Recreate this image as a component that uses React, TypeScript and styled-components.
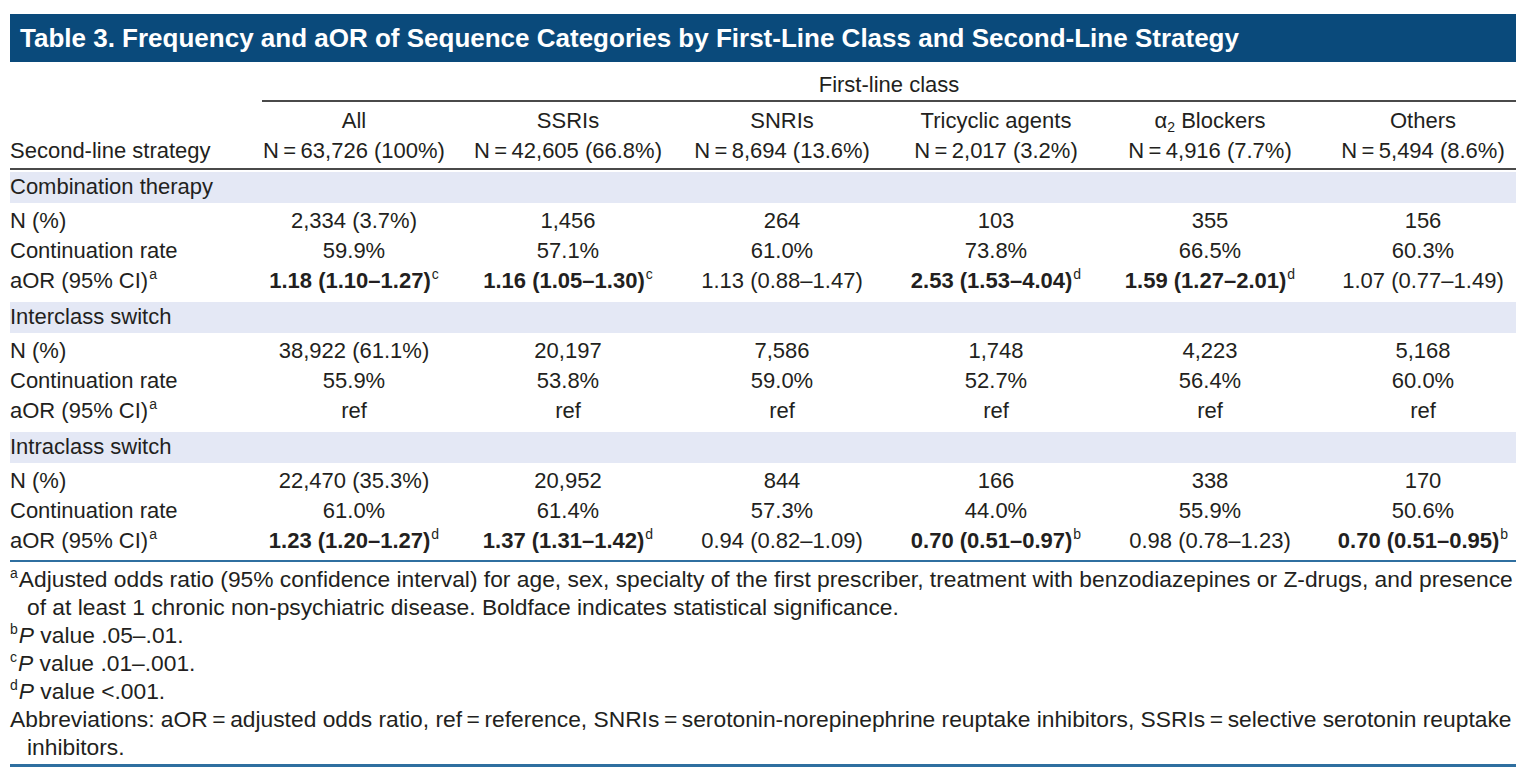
import React from 'react';
import styled, { createGlobalStyle } from 'styled-components';

const GlobalStyle = createGlobalStyle`
  body {
    margin: 0;
    background: #ffffff;
    color: #231f20;
    font-family: "Liberation Sans", Arial, sans-serif;
  }
`;

const Page = styled.div`
  width: 1506px;
  padding: 14px 20px 0 10px;
`;

const TitleBar = styled.div`
  height: 48px;
  display: flex;
  align-items: center;
  padding-left: 10px;
  background: #0a4a7b;
  color: #ffffff;
  font-size: 26px;
  font-weight: bold;
`;

const Row = styled.div`
  display: grid;
  grid-template-columns: 237px repeat(5, 214px) 199px;
  font-size: 22px;
  line-height: 30px;
  white-space: nowrap;
`;

const GroupHeader = styled(Row)`
  height: 40px;
  align-items: end;
`;

const SpanTitle = styled.div`
  grid-column: 2 / -1;
  margin-left: 15px;
  text-align: center;
  border-bottom: 2px solid #4a4a4a;
`;

const HeadBlock = styled.div`
  padding: 4px 0 2px;
  border-bottom: 2px solid #4a4a4a;
`;

const Cell = styled.div<{ $label?: boolean }>`
  text-align: ${(p) => (p.$label ? 'left' : 'center')};
  &:last-child {
    padding-left: 13px;
  }
`;

const Band = styled.div`
  margin-top: 2px;
  height: 31px;
  line-height: 30px;
  background: #e4e8f5;
  font-size: 22px;
`;

const Body = styled.div`
  padding: 3px 0 4px;
`;

const Bold = styled.b`
  font-weight: bold;
`;

const Sup = styled.sup`
  font-size: 14px;
  font-weight: normal;
  vertical-align: 9px;
  line-height: 0;
  margin-left: 1px;
`;

const Sub = styled.sub`
  font-size: 14px;
  vertical-align: -4px;
  line-height: 0;
`;

const TableEnd = styled.div`
  border-top: 2px solid #2f6fa0;
`;

const Notes = styled.div`
  padding: 3px 0 3px;
  font-size: 22.8px;
  line-height: 28px;
  border-bottom: 3px solid #2f6fa0;
`;

const Note = styled.p`
  margin: 0;
  padding-left: 17px;
  text-indent: -17px;
  white-space: nowrap;
`;

const NoteSup = styled.sup`
  font-size: 14px;
  vertical-align: 9px;
  line-height: 0;
  margin-right: 1px;
`;

type Value = { text: string; bold?: boolean; mark?: string };

type DataRow = { label: React.ReactNode; values: Value[] };

type Section = { title: string; rows: DataRow[] };

const aLabel = (
  <>
    aOR (95% CI)<Sup>a</Sup>
  </>
);

const plain = (...items: string[]): Value[] => items.map((text) => ({ text }));

const sections: Section[] = [
  {
    title: 'Combination therapy',
    rows: [
      { label: 'N (%)', values: plain('2,334 (3.7%)', '1,456', '264', '103', '355', '156') },
      { label: 'Continuation rate', values: plain('59.9%', '57.1%', '61.0%', '73.8%', '66.5%', '60.3%') },
      {
        label: aLabel,
        values: [
          { text: '1.18 (1.10–1.27)', bold: true, mark: 'c' },
          { text: '1.16 (1.05–1.30)', bold: true, mark: 'c' },
          { text: '1.13 (0.88–1.47)' },
          { text: '2.53 (1.53–4.04)', bold: true, mark: 'd' },
          { text: '1.59 (1.27–2.01)', bold: true, mark: 'd' },
          { text: '1.07 (0.77–1.49)' },
        ],
      },
    ],
  },
  {
    title: 'Interclass switch',
    rows: [
      { label: 'N (%)', values: plain('38,922 (61.1%)', '20,197', '7,586', '1,748', '4,223', '5,168') },
      { label: 'Continuation rate', values: plain('55.9%', '53.8%', '59.0%', '52.7%', '56.4%', '60.0%') },
      { label: aLabel, values: plain('ref', 'ref', 'ref', 'ref', 'ref', 'ref') },
    ],
  },
  {
    title: 'Intraclass switch',
    rows: [
      { label: 'N (%)', values: plain('22,470 (35.3%)', '20,952', '844', '166', '338', '170') },
      { label: 'Continuation rate', values: plain('61.0%', '61.4%', '57.3%', '44.0%', '55.9%', '50.6%') },
      {
        label: aLabel,
        values: [
          { text: '1.23 (1.20–1.27)', bold: true, mark: 'd' },
          { text: '1.37 (1.31–1.42)', bold: true, mark: 'd' },
          { text: '0.94 (0.82–1.09)' },
          { text: '0.70 (0.51–0.97)', bold: true, mark: 'b' },
          { text: '0.98 (0.78–1.23)' },
          { text: '0.70 (0.51–0.95)', bold: true, mark: 'b' },
        ],
      },
    ],
  },
];

const columns: { name: React.ReactNode; n: string }[] = [
  { name: 'All', n: 'N = 63,726 (100%)' },
  { name: 'SSRIs', n: 'N = 42,605 (66.8%)' },
  { name: 'SNRIs', n: 'N = 8,694 (13.6%)' },
  { name: 'Tricyclic agents', n: 'N = 2,017 (3.2%)' },
  {
    name: (
      <>
        α<Sub>2</Sub> Blockers
      </>
    ),
    n: 'N = 4,916 (7.7%)',
  },
  { name: 'Others', n: 'N = 5,494 (8.6%)' },
];

// thin spaces around "=" like the typeset original
const tight = (s: string) => s.replace(/ = /g, '\u2009=\u2009');

const App: React.FC = () => {
  return (
    <Page>
      <GlobalStyle />
      <TitleBar>
        Table 3. Frequency and aOR of Sequence Categories by First-Line Class and Second-Line Strategy
      </TitleBar>

      <GroupHeader>
        <SpanTitle>First-line class</SpanTitle>
      </GroupHeader>

      <HeadBlock>
        <Row>
          <Cell $label />
          {columns.map((c, i) => (
            <Cell key={i}>{c.name}</Cell>
          ))}
        </Row>
        <Row>
          <Cell $label>Second-line strategy</Cell>
          {columns.map((c, i) => (
            <Cell key={i}>{tight(c.n)}</Cell>
          ))}
        </Row>
      </HeadBlock>

      {sections.map((s) => (
        <div key={s.title}>
          <Band>{s.title}</Band>
          <Body>
            {s.rows.map((r, ri) => (
              <Row key={ri}>
                <Cell $label>{r.label}</Cell>
                {r.values.map((v, vi) => (
                  <Cell key={vi}>
                    {v.bold ? <Bold>{v.text}</Bold> : v.text}
                    {v.mark && <Sup>{v.mark}</Sup>}
                  </Cell>
                ))}
              </Row>
            ))}
          </Body>
        </div>
      ))}

      <TableEnd />

      <Notes>
        <Note>
          <NoteSup>a</NoteSup>Adjusted odds ratio (95% confidence interval) for age, sex, specialty of the first
          prescriber, treatment with benzodiazepines or Z-drugs, and presence
          <br />
          of at least 1 chronic non-psychiatric disease. Boldface indicates statistical significance.
        </Note>
        <Note>
          <NoteSup>b</NoteSup>
          <i>P</i> value .05–.01.
        </Note>
        <Note>
          <NoteSup>c</NoteSup>
          <i>P</i> value .01–.001.
        </Note>
        <Note>
          <NoteSup>d</NoteSup>
          <i>P</i> value &lt;.001.
        </Note>
        <Note>
          Abbreviations: aOR{tight(' = ')}adjusted odds ratio, ref{tight(' = ')}reference, SNRIs{tight(' = ')}
          serotonin-norepinephrine reuptake inhibitors, SSRIs{tight(' = ')}selective serotonin reuptake
          <br />
          inhibitors.
        </Note>
      </Notes>
    </Page>
  );
};

export default App;
